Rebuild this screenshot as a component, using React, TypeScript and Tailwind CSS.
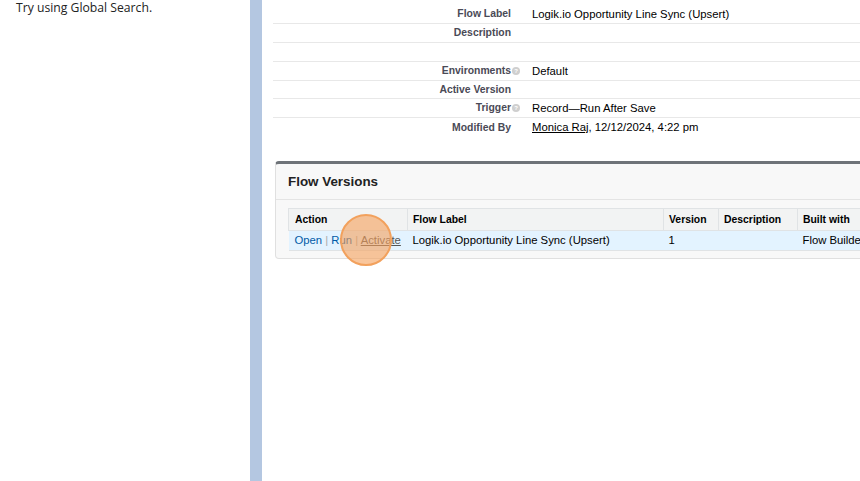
import React from "react";

function Help() {
  return (
    <span className="inline-flex h-[8px] w-[8px] items-center justify-center rounded-full bg-[#cfcfcf] text-[6px] font-bold leading-none text-white">
      ?
    </span>
  );
}

const rows: { label: string; value?: React.ReactNode; help?: boolean; h: string; line: boolean }[] = [
  { label: "Flow Label", value: "Logik.io Opportunity Line Sync (Upsert)", h: "h-[24px] pt-[5px]", line: true },
  { label: "Description", h: "h-[19px]", line: true },
  { label: "", h: "h-[19px]", line: true },
  { label: "Environments", value: "Default", help: true, h: "h-[19px]", line: true },
  { label: "Active Version", h: "h-[18px]", line: true },
  { label: "Trigger", value: "Record\u2014Run After Save", help: true, h: "h-[19px]", line: true },
  {
    label: "Modified By",
    value: (
      <>
        <span className="underline">Monica Raj</span>, 12/12/2024, 4:22 pm
      </>
    ),
    h: "h-[19px]",
    line: false,
  },
];

export default function App() {
  return (
    <div className="flex h-[481px] w-[860px] overflow-hidden bg-white" style={{ fontFamily: "'Liberation Sans', Arial, sans-serif" }}>
      <aside className="w-[250px] shrink-0 px-4">
        <p className="text-[12.2px] leading-[16px] text-[#222]" style={{ fontFamily: "'Open Sans', 'Noto Sans', sans-serif" }}>
          Try using Global Search.
        </p>
      </aside>
      <div className="w-[12px] shrink-0 bg-[#b4c7e1]" />
      <main className="flex-1 overflow-hidden pl-[11px]">
        <div className="w-[700px]">
          {rows.map((r, i) => (
            <div
              key={i}
              className={`flex items-center ${r.h} ${r.line ? "border-b border-[#e8e8e8]" : ""}`}
            >
              <div className="w-[238px] text-right text-[10.4px] font-bold text-[#4a4a56]">{r.label}</div>
              <div className="flex w-[21px] items-center pl-[1px]">{r.help ? <Help /> : null}</div>
              <div className="text-[11.3px] text-black">{r.value}</div>
            </div>
          ))}
        </div>
        <section className="ml-[2px] mt-[24px] w-[640px] rounded-[4px] border border-[#e0e0e0] border-t-[3px] border-t-[#6e7378] bg-[#f8f8f8] pb-[7px]">
          <div className="flex h-[36px] items-center border-b border-[#e4e4e4] px-[12px] pt-[1px]">
            <h2 className="text-[13.4px] font-bold text-[#222]">Flow Versions</h2>
          </div>
          <div className="relative ml-[12px] mt-[8px]">
            <table className="w-[620px] table-fixed border-collapse text-left">
              <thead>
                <tr className="h-[22px] bg-[#f2f3f3] text-[10.4px] font-bold text-black">
                  <th className="w-[119px] border border-[#e0e3e5] px-[6px] pt-[1px] font-bold">Action</th>
                  <th className="w-[256px] border border-[#e0e3e5] px-[5px] pt-[1px] font-bold">Flow Label</th>
                  <th className="w-[55px] border border-[#e0e3e5] px-[5px] pt-[1px] font-bold">Version</th>
                  <th className="w-[79px] border border-[#e0e3e5] px-[5px] pt-[1px] font-bold">Description</th>
                  <th className="border border-[#e0e3e5] px-[5px] pt-[1px] font-bold">Built with</th>
                </tr>
              </thead>
              <tbody>
                <tr className="h-[20px] bg-[#e3f3ff] text-[11.3px] text-black">
                  <td className="border-y border-[#e0e3e5] px-[6px] whitespace-nowrap">
                    <span className="text-[#015ba7]">Open</span>
                    <span className="text-[#aaa]"> | </span>
                    <span className="text-[#015ba7]">Run</span>
                    <span className="text-[#aaa]"> | </span>
                    <span className="text-[#555] underline">Activate</span>
                  </td>
                  <td className="border-y border-[#e0e3e5] px-[5px] whitespace-nowrap">Logik.io Opportunity Line Sync (Upsert)</td>
                  <td className="border-y border-[#e0e3e5] px-[5px]">1</td>
                  <td className="border-y border-[#e0e3e5] px-[5px]"></td>
                  <td className="border-y border-[#e0e3e5] px-[5px] whitespace-nowrap">Flow Builder</td>
                </tr>
              </tbody>
            </table>
            <div className="pointer-events-none absolute left-[52px] top-[6px] h-[52px] w-[52px] rounded-full border-2 border-[#f2a15d] bg-[#f5a05a]/60" />
          </div>
        </section>
      </main>
    </div>
  );
}
